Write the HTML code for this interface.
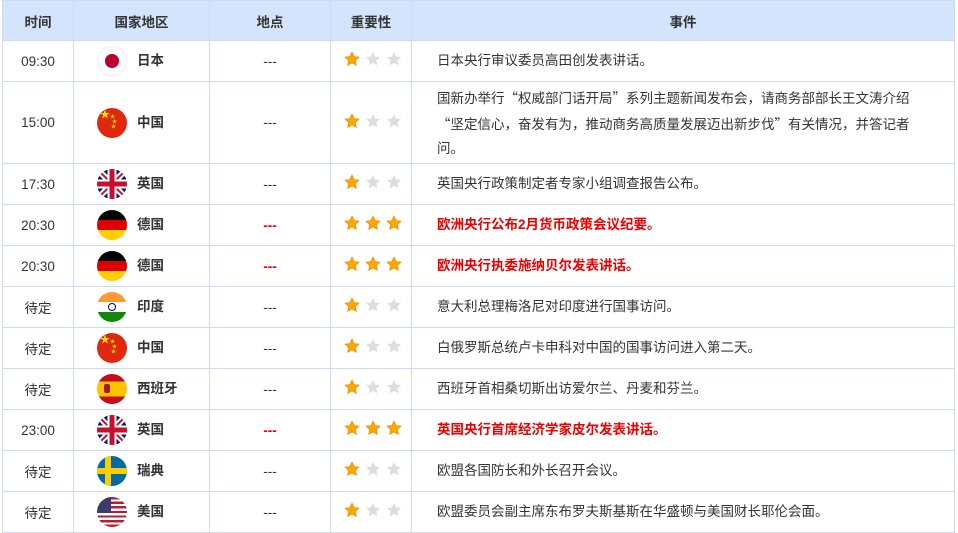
<!DOCTYPE html><html><head><meta charset="utf-8"><style>
body{margin:0;background:#fff;font-family:"Liberation Sans","Noto Sans CJK SC",sans-serif;font-size:13.5px;color:#333}
table{position:absolute;left:2px;top:0;border-collapse:collapse;table-layout:fixed;width:953px}
td,th{border:1px solid #c9dbf5;text-align:center;padding:0}
th{background:#d4e4fc;height:39px;font-weight:bold;font-size:13.5px;color:#333}
td{height:40px}
td.e{text-align:left;padding-left:25px;line-height:24px}
.r{color:#e00;font-weight:bold}
.c{display:flex;align-items:center;padding-left:23px;line-height:14px}
.f{width:30px;height:30px;border-radius:50%;overflow:hidden;margin-right:10px;position:relative;flex:none}
.s{display:inline-block;width:16px;height:16px;margin:0 2.5px;vertical-align:middle}
.rd{color:#e00;font-weight:bold}
.w{font-family:"Noto Sans CJK SC",sans-serif}
</style></head><body>
<svg width="0" height="0" style="position:absolute"><defs>
<symbol id="st" viewBox="0 0 24 24"><path d="M12 1.5l3.2 6.8 7.3.9-5.4 5 1.4 7.3L12 17.9l-6.5 3.6 1.4-7.3-5.4-5 7.3-.9z"/></symbol>
</defs></svg>
<table>
<colgroup><col style="width:71px"><col style="width:136px"><col style="width:121px"><col style="width:81px"><col></colgroup>
<tr><th>时间</th><th>国家地区</th><th>地点</th><th>重要性</th><th>事件</th></tr>
</table>
<script>
const Y='<svg class="s" fill="#fca800" stroke="#e98c00" stroke-width="1"><use href="#st"/></svg>',G='<svg class="s" fill="#ddd"><use href="#st"/></svg>';
const flags={
jp:'<div class="f" style="background:#fff;border:1px solid #eee;box-sizing:border-box"><div style="position:absolute;left:7px;top:7px;width:14px;height:14px;border-radius:50%;background:#bc002d"></div></div>',
cn:'<div class="f" style="background:#de2910"><span style="position:absolute;left:3px;top:3px;color:#ffde00;font-size:10px;line-height:10px">★</span><span style="position:absolute;left:13px;top:2px;color:#ffde00;font-size:5px">★</span><span style="position:absolute;left:15px;top:7px;color:#ffde00;font-size:5px">★</span><span style="position:absolute;left:14px;top:12px;color:#ffde00;font-size:5px">★</span></div>',
gb:'<div class="f" style="background:#012169"><svg width="30" height="30" viewBox="0 0 30 30"><path d="M0 0L30 30M30 0L0 30" stroke="#fff" stroke-width="6"/><path d="M0 0L30 30M30 0L0 30" stroke="#c8102e" stroke-width="2"/><path d="M15 0V30M0 15H30" stroke="#fff" stroke-width="9"/><path d="M15 0V30M0 15H30" stroke="#c8102e" stroke-width="5"/></svg></div>',
de:'<div class="f" style="background:linear-gradient(#000 0 33%,#dd0000 33% 66%,#ffce00 66%)"></div>',
in:'<div class="f" style="background:linear-gradient(#ff9933 0 33%,#fff 33% 66%,#138808 66%)"><div style="position:absolute;left:11px;top:11px;width:6px;height:6px;border:1px solid #000080;border-radius:50%"></div></div>',
es:'<div class="f" style="background:linear-gradient(#c60b1e 0 25%,#ffc400 25% 75%,#c60b1e 75%)"><div style="position:absolute;left:7px;top:10px;width:6px;height:9px;background:#ad1519;border-radius:2px"></div></div>',
se:'<div class="f" style="background:#006aa7"><div style="position:absolute;left:0;top:12px;width:30px;height:6px;background:#fecc00"></div><div style="position:absolute;left:8px;top:0;width:6px;height:30px;background:#fecc00"></div></div>',
us:'<div class="f" style="background:repeating-linear-gradient(#b22234 0 2.3px,#fff 2.3px 4.6px)"><div style="position:absolute;left:0;top:0;width:14px;height:16px;background:#3c3b6e"></div></div>'};
const rows=[
['09:30','jp','日本',0,'日本央行审议委员高田创发表讲话。'],
['15:00','cn','中国',0,'国新办举行<span class="w">“</span>权威部门话开局<span class="w">”</span>系列主题新闻发布会，请商务部部长王文涛介绍<br><span class="w">“</span>坚定信心，奋发有为，推动商务高质量发展迈出新步伐<span class="w">”</span>有关情况，并答记者<br>问。'],
['17:30','gb','英国',0,'英国央行政策制定者专家小组调查报告公布。'],
['20:30','de','德国',1,'欧洲央行公布2月货币政策会议纪要。'],
['20:30','de','德国',1,'欧洲央行执委施纳贝尔发表讲话。'],
['待定','in','印度',0,'意大利总理梅洛尼对印度进行国事访问。'],
['待定','cn','中国',0,'白俄罗斯总统卢卡申科对中国的国事访问进入第二天。'],
['待定','es','西班牙',0,'西班牙首相桑切斯出访爱尔兰、丹麦和芬兰。'],
['23:00','gb','英国',1,'英国央行首席经济学家皮尔发表讲话。'],
['待定','se','瑞典',0,'欧盟各国防长和外长召开会议。'],
['待定','us','美国',0,'欧盟委员会副主席东布罗夫斯基斯在华盛顿与美国财长耶伦会面。']];
let h='';
rows.forEach((r,i)=>{h+=`<tr><td${i==1?' style="height:81px"':''}>${r[0]}</td><td><div class="c">${flags[r[1]]}<b>${r[2]}</b></div></td><td>${r[3]?'<span class="rd">---</span>':'---'}</td><td><div style="margin-top:-4px;padding-left:4px">${r[3]?Y+Y+Y:Y+G+G}</div></td><td class="e${r[3]?' r':''}">${r[4]}</td></tr>`});
document.querySelector('table').insertAdjacentHTML('beforeend',h);
</script>
</body></html>
